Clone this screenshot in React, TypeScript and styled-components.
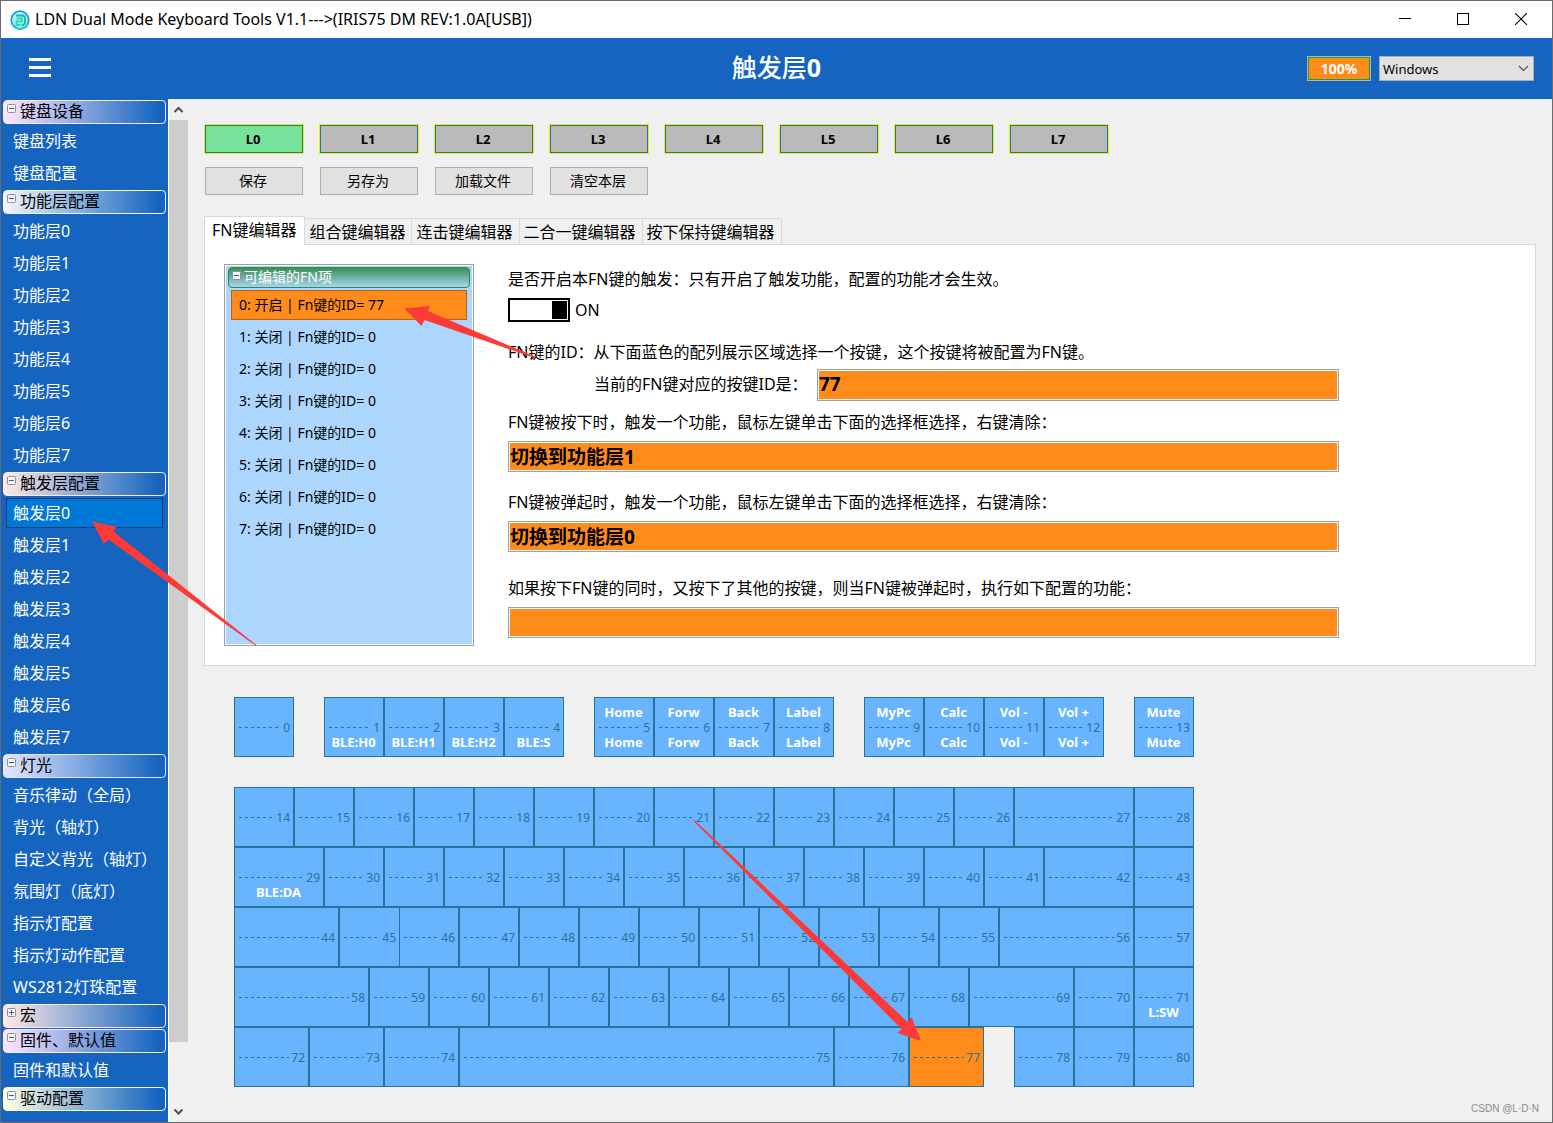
import React, { useState } from "react";
import styled, { createGlobalStyle, css } from "styled-components";

const blue = "#1565c0";
const orange = "#ff8c1a";
const keyBlue = "#69b4ff";
const line = "#277399";
const sans = `"Noto Sans", "Noto Sans CJK SC", sans-serif`;

const GlobalStyle = createGlobalStyle`
  *, *::before, *::after { box-sizing: border-box; }
  body { margin: 0; background: #f0f0f0; font-family: ${sans}; font-size: 16px; color: #000; }
  button, input, select { font-family: inherit; color: inherit; margin: 0; }
  ul { list-style: none; margin: 0; padding: 0; }
`;

/* ---------- window frame ---------- */

const Frame = styled.div`
  position: relative;
  display: flex;
  flex-direction: column;
  height: 100vh;
  border: 1px solid #6b6b6b;
  background: #f0f0f0;
  overflow: hidden;
`;

const TitleBar = styled.header`
  flex: none;
  display: flex;
  align-items: center;
  height: 37px;
  padding-left: 9px;
  background: #fff;
`;

const TitleText = styled.span`
  flex: 1;
  margin-left: 5px;
  padding-bottom: 2px;
  font-size: 16px;
  line-height: 20px;
  white-space: nowrap;
`;

const CaptionButton = styled.button`
  display: flex;
  align-items: center;
  justify-content: center;
  width: 58px;
  height: 37px;
  padding: 0 0 1px;
  border: 0;
  background: none;
`;

const CaptionButtons = styled.div`
  display: flex;
  margin-right: 2px;
`;

const Banner = styled.div`
  flex: none;
  display: grid;
  grid-template-columns: 1fr auto 1fr;
  align-items: center;
  height: 61px;
  background: ${blue};
  color: #fff;
`;

const MenuButton = styled.button`
  display: flex;
  flex-direction: column;
  gap: 5px;
  width: 22px;
  margin-left: 28px;
  padding: 0 0 2px;
  border: 0;
  background: none;
`;

const MenuBar = styled.span`
  height: 3px;
  background: #fff;
`;

const PageTitle = styled.h1`
  margin: 0;
  padding-bottom: 4px;
  font-size: 25px;
  line-height: 32px;
  font-weight: 500;
`;

const Strong = styled.span`
  font-weight: 700;
`;

const BannerTools = styled.div`
  justify-self: end;
  display: flex;
  gap: 8px;
  margin-right: 18px;
`;

const Battery = styled.output`
  display: flex;
  width: 64px;
  height: 25px;
  border: 1px solid #b4b4b4;
`;

const BatteryLevel = styled.span`
  flex: 1;
  border: 1px solid #1fa22e;
  background: ${orange};
  font-size: 14px;
  line-height: 21px;
  font-weight: 700;
  text-align: center;
`;

const SelectWrap = styled.div`
  position: relative;
  width: 155px;
  height: 25px;
`;

const Select = styled.select`
  appearance: none;
  width: 100%;
  height: 100%;
  padding: 0 24px 0 3px;
  border: 1px solid #adadad;
  border-radius: 0;
  background: #e1e1e1;
  color: #000;
  font-size: 13px;
`;

const SelectArrow = styled.svg`
  position: absolute;
  right: 5px;
  top: 9px;
  pointer-events: none;
`;

/* ---------- sidebar ---------- */

const Body = styled.div`
  flex: 1;
  min-height: 0;
  display: flex;
`;

const Sidebar = styled.nav`
  flex: none;
  display: flex;
  flex-direction: column;
  gap: 1px;
  width: 167px;
  padding-top: 1px;
  background: ${blue};
  overflow: hidden;
`;

const Group = styled.section`
  flex: none;
  display: flex;
  flex-direction: column;
  gap: 1px;
`;

const GroupHead = styled.button<{ $tint: string }>`
  display: flex;
  align-items: flex-start;
  gap: 4px;
  height: 24px;
  margin: 0 2px;
  padding: 3px;
  border: 1px solid ${(p) => p.$tint};
  border-radius: 4px;
  background: linear-gradient(90deg, ${(p) => p.$tint}, ${blue} 96%);
  font-size: 16px;
  line-height: 14px;
  text-align: left;
`;

const NavLink = styled.a<{ $active: boolean }>`
  display: block;
  height: 30px;
  margin: 1px 5px;
  padding-left: 6px;
  border: 1px solid transparent;
  color: #fff;
  line-height: 28px;
  text-decoration: none;
  white-space: nowrap;
  ${(p) =>
    p.$active &&
    css`
      border-color: #0a3c78;
      background: #0078d7;
    `}
`;

const NavItem = styled.li`
  display: flex;
  flex-direction: column;
`;

const ScrollBar = styled.div`
  flex: none;
  display: flex;
  flex-direction: column;
  width: 20px;
  border-left: 1px solid #fff;
  background: #f0f0f0;
`;

const ScrollButton = styled.button`
  flex: none;
  display: flex;
  align-items: center;
  justify-content: center;
  height: 21px;
  padding: 0;
  border: 0;
  background: none;
`;

const ScrollTrack = styled.div`
  flex: 1;
  min-height: 0;
`;

const ScrollThumb = styled.div`
  height: 94%;
  background: #cdcdcd;
`;

/* ---------- main area ---------- */

const Main = styled.main`
  flex: 1;
  min-width: 0;
  padding: 25px 16px 0;
`;

const LayerRow = styled.div`
  display: flex;
  gap: 15px;
`;

const LayerButton = styled.button<{ $active: boolean }>`
  width: 100px;
  height: 30px;
  padding: 0 2px 0 0;
  border: 1px solid #eeee00;
  background: ${(p) => (p.$active ? "#76e29c" : "#bababa")};
  box-shadow: inset 0 0 0 1px ${line};
  font-size: 13px;
  line-height: 26px;
  font-weight: 700;
`;

const ActionRow = styled.div`
  display: flex;
  gap: 17px;
  margin: 13px 0 21px 1px;
`;

const ActionButton = styled.button`
  width: 98px;
  height: 28px;
  padding: 0 2px 0 0;
  border: 1px solid #adadad;
  background: #e1e1e1;
  font-size: 14px;
  line-height: 24px;
`;

const TabList = styled.div`
  display: flex;
  align-items: flex-end;
`;

const Tab = styled.button<{ $active: boolean }>`
  height: 26px;
  padding: 2px 6px 0 4px;
  border: 1px solid #d9d9d9;
  border-width: 1px 1px 0 0;
  background: #f0f0f0;
  font-size: 16px;
  line-height: 23px;
  white-space: nowrap;
  ${(p) =>
    p.$active &&
    css`
      height: 29px;
      margin-bottom: -1px;
      padding: 0 8px 2px 7px;
      border-left-width: 1px;
      background: #fff;
      z-index: 1;
    `}
`;

const Pane = styled.section`
  display: flex;
  gap: 34px;
  padding: 19px;
  border: 1px solid #d9d9d9;
  background: #fff;
`;

const FnList = styled.div`
  flex: none;
  width: 250px;
  height: 382px;
  padding: 1px 2px;
  border: 1px solid #a0a0a0;
  box-shadow: inset 0 0 0 1px #f4f8fc;
  background: #add6ff;
`;

const FnHead = styled.div`
  display: flex;
  align-items: flex-start;
  gap: 3px;
  height: 21px;
  margin: 1px 1px 2px;
  padding: 3px;
  border: 1px solid #2e8b57;
  border-radius: 4px;
  background: linear-gradient(#3b8f54, #a8d2f2);
  color: #fff;
  font-size: 14px;
  line-height: 12px;
`;

const FnOption = styled.button<{ $active: boolean }>`
  display: block;
  width: 236px;
  height: 30px;
  margin: 1px 4px 2px;
  padding: 0 7px;
  border: 1px solid ${(p) => (p.$active ? "#b3621a" : "transparent")};
  background: ${(p) => (p.$active ? orange : "transparent")};
  font-size: 14px;
  line-height: 28px;
  text-align: left;
`;

const Form = styled.form`
  flex: 1;
  max-width: 831px;
  padding-top: 3px;
  line-height: 24px;
`;

const Field = styled.div<{ $top: number }>`
  display: flex;
  flex-direction: column;
  gap: 7px;
  margin-top: ${(p) => p.$top}px;
`;

const SwitchLine = styled.label`
  display: flex;
  align-items: center;
  gap: 5px;
`;

const Switch = styled.input`
  appearance: none;
  display: flex;
  justify-content: flex-end;
  width: 62px;
  height: 24px;
  padding: 1px;
  border: 2px solid #000;
  background: #fff;
  &::before {
    content: "";
    width: 15px;
    background: #000;
  }
  &:not(:checked) {
    justify-content: flex-start;
  }
`;

const IdLine = styled.div`
  display: flex;
  align-items: center;
  margin: 5px 0 0 86px;
`;

const IdLabel = styled.label`
  flex: none;
  width: 223px;
  padding-bottom: 2px;
`;

const ValueBox = styled.input`
  flex: 1 0 auto;
  width: 100%;
  min-width: 0;
  height: 31px;
  padding: 0 0 2px 1px;
  border: 1px solid #a0a0a0;
  box-shadow: inset 0 0 0 1px #f4f8fc;
  border-radius: 0;
  background: ${orange};
  font-size: 19px;
  line-height: 26px;
  font-weight: 700;
`;

const IdBox = styled(ValueBox)`
  flex: 1 1 0;
  height: 32px;
`;

/* ---------- keyboard ---------- */

const Keyboard = styled.div`
  display: flex;
  flex-direction: column;
  margin: 31px 0 0 30px;
`;

const KeyRow = styled.div<{ $gapAfter: number }>`
  display: flex;
  margin-bottom: ${(p) => p.$gapAfter}px;
`;

const Key = styled.button<{ $w: number; $before: number; $overlap: boolean; $on: boolean }>`
  flex: none;
  display: grid;
  grid-template-rows: repeat(3, 15px);
  align-content: start;
  width: ${(p) => p.$w}px;
  height: 60px;
  margin-left: ${(p) => p.$before}px;
  margin-right: ${(p) => (p.$overlap ? -1 : 0)}px;
  padding: 7px 3px 0 4px;
  border: 1px solid ${line};
  background: ${(p) => (p.$on ? orange : keyBlue)};
`;

const KeyLabel = styled.span`
  padding-right: 2px;
  color: #fff;
  font-size: 13px;
  line-height: 15px;
  font-weight: 700;
  text-align: center;
  white-space: nowrap;
`;

const KeyIndex = styled.span`
  display: flex;
  align-items: center;
  gap: 2px;
  color: ${line};
  font-size: 12px;
  line-height: 15px;
`;

const Dashes = styled.span`
  flex: 1;
  height: 1px;
  background: repeating-linear-gradient(90deg, ${line} 0 3px, transparent 3px 6px);
`;

/* ---------- overlays ---------- */

const Arrows = styled.svg`
  position: absolute;
  left: -1px;
  top: -1px;
  pointer-events: none;
`;

const Watermark = styled.span`
  position: absolute;
  right: 13px;
  bottom: 6px;
  color: #8c8c8c;
  font-family: "Liberation Sans", Arial, sans-serif;
  font-size: 10px;
  line-height: 14px;
`;

/* ---------- data ---------- */

type NavGroup = { title: string; tint: string; open: boolean; items: string[] };

const range = (n: number) => Array.from({ length: n }, (_, i) => i);

const groups: NavGroup[] = [
  { title: "键盘设备", tint: "#ffe6ff", open: true, items: ["键盘列表", "键盘配置"] },
  { title: "功能层配置", tint: "#f2f6f8", open: true, items: range(8).map((i) => `功能层${i}`) },
  { title: "触发层配置", tint: "#ffe9e6", open: true, items: range(8).map((i) => `触发层${i}`) },
  {
    title: "灯光",
    tint: "#e6e6ff",
    open: true,
    items: [
      "音乐律动（全局）",
      "背光（轴灯）",
      "自定义背光（轴灯）",
      "氛围灯（底灯）",
      "指示灯配置",
      "指示灯动作配置",
      "WS2812灯珠配置",
    ],
  },
  { title: "宏", tint: "#ffe9e6", open: false, items: [] },
  { title: "固件、默认值", tint: "#ffe6ff", open: true, items: ["固件和默认值"] },
  { title: "驱动配置", tint: "#ffffe6", open: true, items: [] },
];

const tabs = ["FN键编辑器", "组合键编辑器", "连击键编辑器", "二合一键编辑器", "按下保持键编辑器"];

type KeySpec = { w?: number; before?: number; top?: string; bottom?: string; overlap?: boolean };

const plain = (n: number): KeySpec[] => range(n).map(() => ({}));
const both = (t: string, before = 0): KeySpec => ({ top: t, bottom: t, before });

const rows: KeySpec[][] = [
  [
    {},
    { before: 30, bottom: "BLE:H0" },
    { bottom: "BLE:H1" },
    { bottom: "BLE:H2" },
    { bottom: "BLE:S" },
    both("Home", 30),
    both("Forw"),
    both("Back"),
    both("Label"),
    both("MyPc", 30),
    both("Calc"),
    both("Vol -"),
    both("Vol +"),
    both("Mute", 30),
  ],
  [...plain(13), { w: 120 }, {}],
  [{ w: 90, bottom: "BLE:DA" }, ...plain(12), { w: 90 }, {}],
  [{ w: 105 }, { w: 61, overlap: true }, ...plain(10), { w: 135 }, {}],
  [{ w: 135 }, ...plain(10), { w: 105 }, {}, { bottom: "L:SW" }],
  [{ w: 75 }, { w: 75 }, { w: 75 }, { w: 375 }, { w: 75 }, { w: 75 }, { before: 30 }, {}, {}],
];

const rowStart = rows.map((_, i) => rows.slice(0, i).reduce((n, r) => n + r.length, 0));

/* ---------- drawings ---------- */

const AppLogo = () => (
  <svg width="20" height="20" viewBox="0 0 20 20" aria-hidden="true">
    <circle cx="10" cy="10" r="8.8" fill="#b4ecf4" stroke="#1c9be6" strokeWidth="1.8" />
    <path d="M2 14a8.800 8.800 0 0 0 16 0" fill="none" stroke="#22cfd6" strokeWidth="1.8" />
    <path d="M6 5.500h6a3 3 0 0 1 3 3v3.500a3.500 3.500 0 0 1-3.500 3.500" fill="none" stroke="#12b8b4" strokeWidth="1.8" />
    <path d="M6.500 8.500h5.500v3H6.500v3.500h4" fill="none" stroke="#1fe0a8" strokeWidth="1.8" />
  </svg>
);

const FoldSvg = styled.svg`
  flex: none;
`;

const FoldIcon = ({ open }: { open: boolean }) => (
  <FoldSvg width="9" height="9" viewBox="0 0 9 9" aria-hidden="true">
    <rect x="0.5" y="0.5" width="8" height="8" rx="1" fill="#f4f4f2" stroke="#919191" />
    <path d={open ? "M2 4.500h5" : "M2 4.500h5M4.500 2v5"} stroke="#3c5aa8" />
  </FoldSvg>
);

const Chevron = ({ down }: { down?: boolean }) => (
  <svg width="11" height="8" viewBox="0 0 11 8" aria-hidden="true">
    <path d={down ? "M1.500 1.500l4 4 4-4" : "M1.500 6l4-4 4 4"} fill="none" stroke="#505050" strokeWidth="2" />
  </svg>
);

export default function App() {
  const [page, setPage] = useState("触发层0");
  const [layer, setLayer] = useState(0);
  const [tab, setTab] = useState(0);
  const [fn, setFn] = useState(0);
  const [key, setKey] = useState(77);
  const [enabled, setEnabled] = useState(true);

  return (
    <>
      <GlobalStyle />
      <Frame>
        <TitleBar>
          <AppLogo />
          <TitleText>{"LDN Dual Mode Keyboard Tools V1.1--->(IRIS75 DM REV:1.0A[USB])"}</TitleText>
          <CaptionButtons>
            <CaptionButton aria-label="最小化">
              <svg width="12" height="12"><path d="M0 5.500h12" stroke="#000" /></svg>
            </CaptionButton>
            <CaptionButton aria-label="最大化">
              <svg width="12" height="12"><rect x="0.5" y="0.5" width="11" height="11" fill="none" stroke="#000" /></svg>
            </CaptionButton>
            <CaptionButton aria-label="关闭">
              <svg width="12" height="12"><path d="M0 0l12 12M12 0L0 12" stroke="#000" strokeWidth="1.1" /></svg>
            </CaptionButton>
          </CaptionButtons>
        </TitleBar>

        <Banner>
          <MenuButton aria-label="菜单">
            <MenuBar />
            <MenuBar />
            <MenuBar />
          </MenuButton>
          <PageTitle>
            触发层<Strong>0</Strong>
          </PageTitle>
          <BannerTools>
            <Battery>
              <BatteryLevel>100%</BatteryLevel>
            </Battery>
            <SelectWrap>
              <Select aria-label="系统" defaultValue="Windows">
                <option>Windows</option>
                <option>Mac</option>
              </Select>
              <SelectArrow width="11" height="7" viewBox="0 0 11 7">
                <path d="M1 1l4.500 4.500L10 1" fill="none" stroke="#505050" strokeWidth="1.2" />
              </SelectArrow>
            </SelectWrap>
          </BannerTools>
        </Banner>

        <Body>
          <Sidebar>
            {groups.map((g) => (
              <Group key={g.title}>
                <GroupHead $tint={g.tint} aria-expanded={g.open}>
                  <FoldIcon open={g.open} />
                  {g.title}
                </GroupHead>
                {g.items.length > 0 && (
                  <ul>
                    {g.items.map((item) => (
                      <NavItem key={item}>
                        <NavLink href="#" $active={item === page} onClick={() => setPage(item)}>
                          {item}
                        </NavLink>
                      </NavItem>
                    ))}
                  </ul>
                )}
              </Group>
            ))}
          </Sidebar>
          <ScrollBar>
            <ScrollButton aria-label="向上滚动">
              <Chevron />
            </ScrollButton>
            <ScrollTrack>
              <ScrollThumb />
            </ScrollTrack>
            <ScrollButton aria-label="向下滚动">
              <Chevron down />
            </ScrollButton>
          </ScrollBar>

          <Main>
            <LayerRow>
              {range(8).map((i) => (
                <LayerButton key={i} $active={i === layer} onClick={() => setLayer(i)}>
                  L{i}
                </LayerButton>
              ))}
            </LayerRow>
            <ActionRow>
              {["保存", "另存为", "加载文件", "清空本层"].map((t) => (
                <ActionButton key={t}>{t}</ActionButton>
              ))}
            </ActionRow>

            <TabList role="tablist">
              {tabs.map((t, i) => (
                <Tab key={t} role="tab" aria-selected={i === tab} $active={i === tab} onClick={() => setTab(i)}>
                  {t}
                </Tab>
              ))}
            </TabList>
            <Pane>
              <FnList>
                <FnHead>
                  <FoldIcon open />
                  可编辑的FN项
                </FnHead>
                {range(8).map((i) => (
                  <FnOption key={i} $active={i === fn} onClick={() => setFn(i)}>
                    {i === 0 ? "0: 开启 | Fn键的ID= 77" : `${i}: 关闭 | Fn键的ID= 0`}
                  </FnOption>
                ))}
              </FnList>

              <Form>
                <Field $top={0}>
                  <span>是否开启本FN键的触发：只有开启了触发功能，配置的功能才会生效。</span>
                  <SwitchLine>
                    <Switch type="checkbox" checked={enabled} onChange={(e) => setEnabled(e.target.checked)} />
                    {enabled ? "ON" : "OFF"}
                  </SwitchLine>
                </Field>
                <Field $top={18}>
                  <span>FN键的ID：从下面蓝色的配列展示区域选择一个按键，这个按键将被配置为FN键。</span>
                </Field>
                <IdLine>
                  <IdLabel htmlFor="fn-id">当前的FN键对应的按键ID是：</IdLabel>
                  <IdBox id="fn-id" readOnly value={key} />
                </IdLine>
                <Field $top={9}>
                  <label htmlFor="fn-down">FN键被按下时，触发一个功能，鼠标左键单击下面的选择框选择，右键清除：</label>
                  <ValueBox id="fn-down" readOnly value="切换到功能层1" />
                </Field>
                <Field $top={18}>
                  <label htmlFor="fn-up">FN键被弹起时，触发一个功能，鼠标左键单击下面的选择框选择，右键清除：</label>
                  <ValueBox id="fn-up" readOnly value="切换到功能层0" />
                </Field>
                <Field $top={24}>
                  <label htmlFor="fn-combo">如果按下FN键的同时，又按下了其他的按键，则当FN键被弹起时，执行如下配置的功能：</label>
                  <ValueBox id="fn-combo" readOnly value="" />
                </Field>
              </Form>
            </Pane>

            <Keyboard>
              {rows.map((row, r) => (
                <KeyRow key={r} $gapAfter={r === 0 ? 30 : 0}>
                  {row.map((k, c) => {
                    const id = rowStart[r] + c;
                    return (
                      <Key
                        key={id}
                        $w={k.w ?? 60}
                        $before={k.before ?? 0}
                        $overlap={!!k.overlap}
                        $on={id === key}
                        onClick={() => setKey(id)}
                      >
                        <KeyLabel>{k.top}</KeyLabel>
                        <KeyIndex>
                          <Dashes />
                          {id}
                        </KeyIndex>
                        <KeyLabel>{k.bottom}</KeyLabel>
                      </Key>
                    );
                  })}
                </KeyRow>
              ))}
            </Keyboard>
          </Main>
        </Body>

        <Arrows width="1000" height="1100" viewBox="0 0 1000 1100" aria-hidden="true">
          <g fill="#fc3a38">
            <path d="M92 521.500L117 527L113.500 531.500L257 645.500L256 646L108.500 539.500L104 544Z" />
            <path d="M404.500 308.500L430 306L428 311L536 357L535 358L424.500 320L421.500 326Z" />
            <path d="M921 1041L897.500 1033L901.500 1029L693.500 821L694.500 820L907.500 1022L911.500 1017Z" />
          </g>
        </Arrows>
        <Watermark>CSDN @L·D·N</Watermark>
      </Frame>
    </>
  );
}
